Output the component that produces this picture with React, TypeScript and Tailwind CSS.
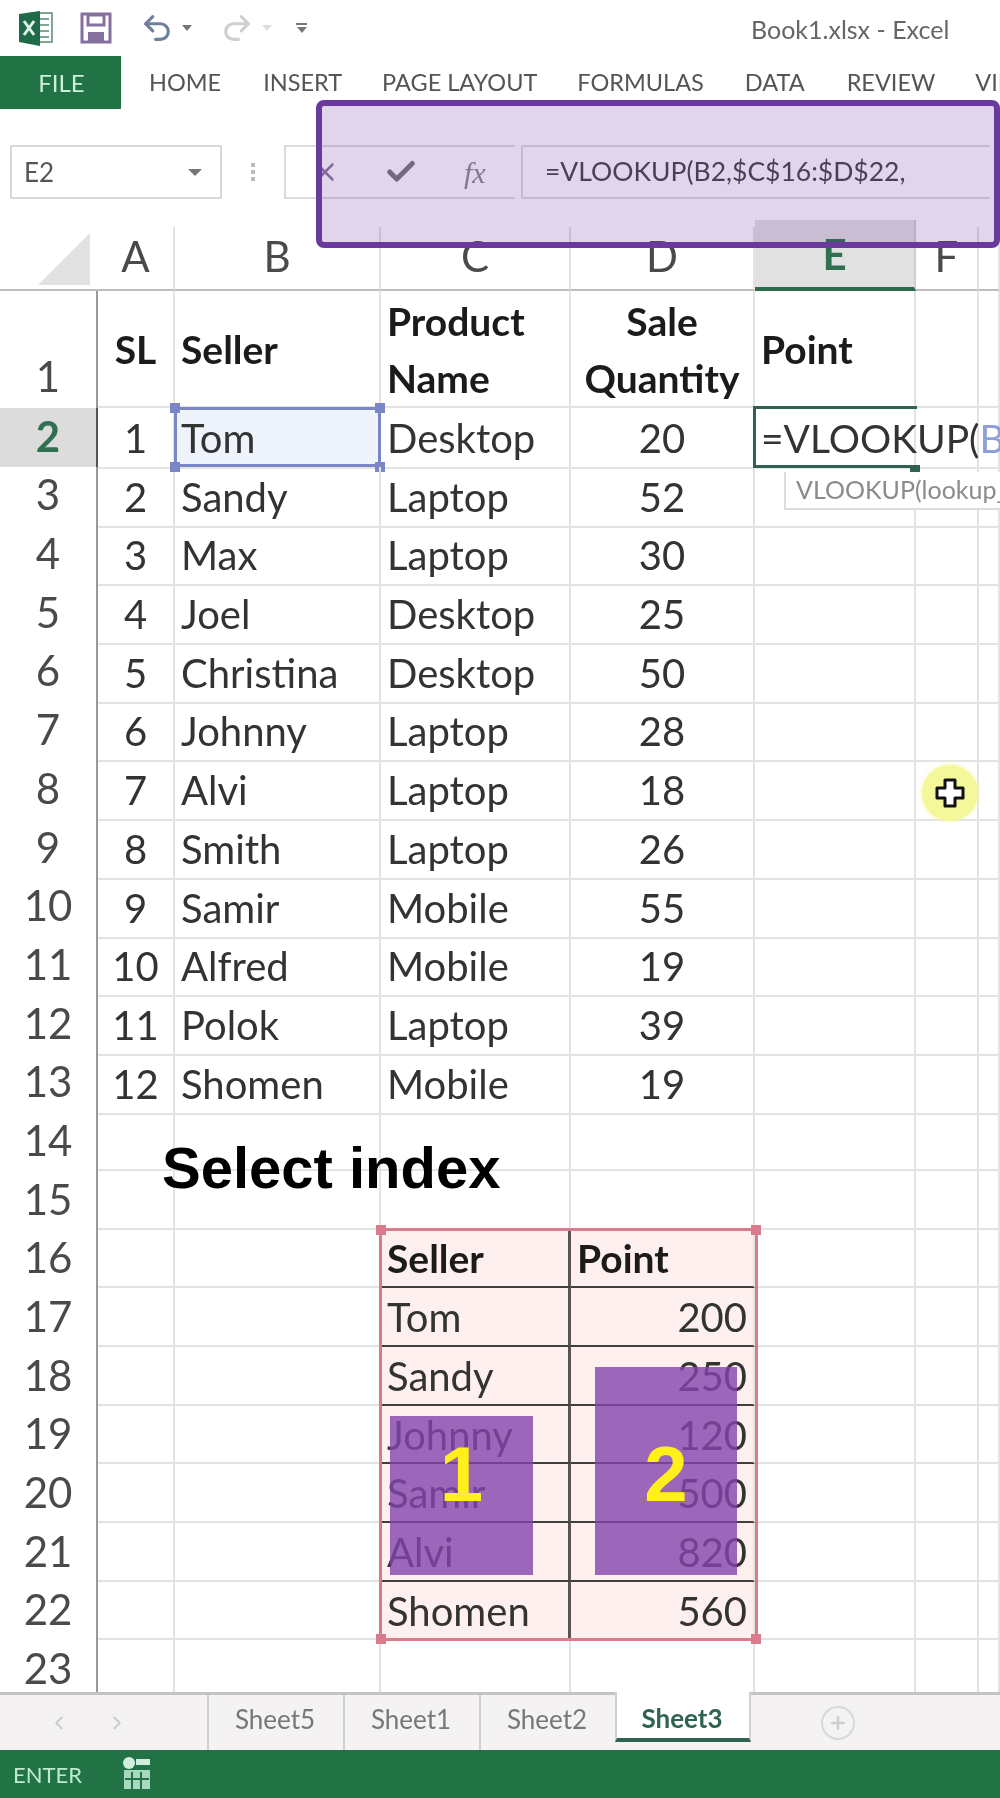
import React from "react";
import { Check, X, Undo2, Redo2, ChevronLeft, ChevronRight, Plus } from "lucide-react";

const data: [string, string, string, string][] = [
  ["1", "Tom", "Desktop", "20"],
  ["2", "Sandy", "Laptop", "52"],
  ["3", "Max", "Laptop", "30"],
  ["4", "Joel", "Desktop", "25"],
  ["5", "Christina", "Desktop", "50"],
  ["6", "Johnny", "Laptop", "28"],
  ["7", "Alvi", "Laptop", "18"],
  ["8", "Smith", "Laptop", "26"],
  ["9", "Samir", "Mobile", "55"],
  ["10", "Alfred", "Mobile", "19"],
  ["11", "Polok", "Laptop", "39"],
  ["12", "Shomen", "Mobile", "19"],
];

const lookup: [string, string][] = [
  ["Seller", "Point"],
  ["Tom", "200"],
  ["Sandy", "250"],
  ["Johnny", "120"],
  ["Samir", "500"],
  ["Alvi", "820"],
  ["Shomen", "560"],
];

const gridCols = "grid grid-cols-[98px_77px_206px_190px_184px_161px_63px_21px]";
const cell = "border-r-2 border-b-2 border-[#e3e3e3] flex items-center pt-[2px] overflow-hidden whitespace-nowrap";
const rowH = "h-[58.7px]";

function Handle({ className }: { className: string }) {
  return <span className={`absolute w-[10px] h-[10px] ${className}`} />;
}

function RowLabel({ n, active }: { n: number; active?: boolean }) {
  return (
    <div
      className={`${rowH} flex items-end justify-center pb-[6px] text-[42px] leading-[50px] border-r-[2px] ${
        active
          ? "bg-[#dcdcdc] text-[#2f6f52] font-bold border-[#555]"
          : "text-[#4a4a4a] border-[#9a9a9a]"
      }`}
    >
      {n}
    </div>
  );
}

function Row({ n, cells }: { n: number; cells: React.ReactNode[] }) {
  return (
    <div className={`${gridCols} ${rowH}`}>
      <RowLabel n={n} active={n === 2} />
      {cells}
    </div>
  );
}

function Empty() {
  return <div className={cell} />;
}

export default function App() {
  return (
    <div className="relative w-[1000px] h-[1798px] overflow-hidden bg-white text-[#333] font-['Lato','Noto_Sans',sans-serif] blur-[0.7px] flex flex-col">
      {/* Quick access + title */}
      <div className="h-[56px] flex items-center pl-[18px] relative">
        <svg width="36" height="36" viewBox="0 0 36 36">
          <rect x="14" y="3" width="20" height="29" fill="#fff" stroke="#7fa892" strokeWidth="2" />
          <path d="M22 9h9M22 15h9M22 21h9M22 27h9" stroke="#7fa892" strokeWidth="2" />
          <path d="M1 4 L22 1 V36 L1 32 Z" fill="#1f6a48" />
          <path d="M6 11 L16 25 M16 11 L6 25" stroke="#dff3e8" strokeWidth="3" />
        </svg>
        <svg className="ml-[26px]" width="32" height="32" viewBox="0 0 32 32">
          <path d="M2 2 H30 V30 H2 Z" fill="none" stroke="#85709f" strokeWidth="3" />
          <rect x="8" y="3" width="16" height="10" fill="none" stroke="#85709f" strokeWidth="3" />
          <rect x="8" y="20" width="16" height="10" fill="#85709f" />
        </svg>
        <Undo2 className="ml-[28px] text-[#6d7f9c]" size={34} strokeWidth={2.2} />
        <span className="ml-[8px] w-0 h-0 border-x-[5px] border-x-transparent border-t-[6px] border-t-[#777]" />
        <Redo2 className="ml-[28px] text-[#cfcfcf]" size={34} strokeWidth={2.2} />
        <span className="ml-[8px] w-0 h-0 border-x-[5px] border-x-transparent border-t-[6px] border-t-[#ddd]" />
        <span className="ml-[24px] flex flex-col items-center gap-[2px]">
          <span className="w-[11px] h-[2px] bg-[#777]" />
          <span className="w-0 h-0 border-x-[5px] border-x-transparent border-t-[6px] border-t-[#777]" />
        </span>
        <span className="absolute left-[751px] top-[13px] text-[25px] leading-[32px] text-[#666] whitespace-nowrap">
          Book1.xlsx - Excel
        </span>
      </div>

      {/* Ribbon tabs */}
      <div className="h-[53px] flex items-center text-[23.5px] text-[#555] whitespace-nowrap overflow-hidden">
        <div className="w-[121px] h-full bg-[#217346] text-[#c9f0d8] flex items-center justify-center pl-[2px] shrink-0 text-[24px]">FILE</div>
        <span className="ml-[28px]">HOME</span>
        <span className="ml-[42px]">INSERT</span>
        <span className="ml-[40px]">PAGE LAYOUT</span>
        <span className="ml-[40px]">FORMULAS</span>
        <span className="ml-[41px]">DATA</span>
        <span className="ml-[42px]">REVIEW</span>
        <span className="ml-[40px]">VIEW</span>
      </div>

      {/* Formula bar */}
      <div className="mt-[36px] h-[54px] flex items-stretch pl-[10px]">
        <div className="w-[212px] border-2 border-[#d8d8d8] flex items-center justify-between pl-[12px] pr-[18px] text-[26px] text-[#555]">
          E2
          <span className="w-0 h-0 border-x-[7px] border-x-transparent border-t-[7px] border-t-[#777]" />
        </div>
        <div className="w-[62px] flex flex-col items-center justify-center gap-[3px]">
          <span className="w-[4px] h-[4px] bg-[#bbb]" />
          <span className="w-[4px] h-[4px] bg-[#bbb]" />
          <span className="w-[4px] h-[4px] bg-[#bbb]" />
        </div>
        <div className="w-[231px] border-y-2 border-l-2 border-[#dcdcdc] flex items-center text-[#777]">
          <X className="ml-[24px] text-[#8b7a9b]" size={30} strokeWidth={2} />
          <Check className="ml-[44px]" size={34} strokeWidth={3.5} />
          <span className="ml-[46px] font-['Liberation_Serif',serif] italic text-[30px] text-[#8a8a8a]">fx</span>
        </div>
        <div className="flex-1 border-y-2 border-l-2 border-[#dcdcdc] ml-[6px] mr-[10px] flex items-center pl-[22px] text-[26.5px] text-[#444] whitespace-nowrap">
          =VLOOKUP(B2,$C$16:$D$22,
        </div>
      </div>

      {/* Column headers */}
      <div className={`${gridCols} h-[92px] text-[42px] text-[#4a4a4a]`}>
        <div className="relative border-b-2 border-[#bdbdbd]">
          <span className="absolute left-[38px] top-[34px] w-0 h-0 border-l-[52px] border-l-transparent border-b-[52px] border-b-[#e2e2e2]" />
        </div>
        {["A", "B", "C", "D", "E", "F", "G"].map((c) => (
          <div
            key={c}
            className={`flex items-end justify-center pb-[8px] border-r-2 ${
              c === "E"
                ? "bg-[#e1e1e1] text-[#2f6f52] font-bold border-b-[4px] border-b-[#2c6b4d] border-r-[#cfcfcf] mt-[21px]"
                : "border-b-2 border-b-[#bdbdbd] border-r-[#e3e3e3] mt-[28px]"
            }`}
          >
            <span className="leading-[50px]">{c === "G" ? "" : c}</span>
          </div>
        ))}
      </div>

      {/* Sheet */}
      <div className="relative flex-1 min-h-0 overflow-hidden">
        <div className="text-[40px] leading-[57px]">
          {/* Row 1 */}
          <div className={`${gridCols} h-[117px] font-bold text-[#1b1b1b] text-[39px]`}>
            <div className="flex items-end justify-center pb-[7px] text-[42px] leading-[50px] font-normal text-[#4a4a4a] border-r-[2px] border-[#9a9a9a]">1</div>
            <div className={`${cell} justify-center`}>SL</div>
            <div className={`${cell} pl-[6px]`}>Seller</div>
            <div className={`${cell} pl-[6px]`}>
              <span>Product<br />Name</span>
            </div>
            <div className={`${cell} justify-center text-center`}>
              <span>Sale<br />Quantity</span>
            </div>
            <div className={`${cell} pl-[6px]`}>Point</div>
            <div className={cell} />
            <div className={cell} />
          </div>

          {/* Rows 2-13 */}
          {data.map((r, i) => {
            const n = i + 2;
            return (
              <Row
                key={n}
                n={n}
                cells={[
                  <div key="a" className={`${cell} justify-center`}>{r[0]}</div>,
                  <div key="b" className={`${cell} pl-[6px] relative overflow-visible ${n === 2 ? "bg-[#eef3fc]" : ""}`}>
                    {r[1]}
                    {n === 2 && (
                      <>
                        <span className="absolute -left-[1px] -top-[1px] w-[207px] h-[60px] border-[3px] border-[#7a86c6]" />
                        <Handle className="-left-[5px] -top-[5px] bg-[#7a86c6]" />
                        <Handle className="-right-[6px] -top-[5px] bg-[#7a86c6]" />
                        <Handle className="-left-[5px] -bottom-[5px] bg-[#7a86c6]" />
                        <Handle className="-right-[6px] -bottom-[5px] bg-[#7a86c6]" />
                      </>
                    )}
                  </div>,
                  <div key="c" className={`${cell} pl-[6px]`}>{r[2]}</div>,
                  <div key="d" className={`${cell} justify-center`}>{r[3]}</div>,
                  <div key="e" className={`${cell} text-[39px] ${n === 2 ? "relative overflow-visible pl-[6px] z-10" : ""}`}>
                    {n === 2 && (
                      <>
                        <span className="relative z-10 text-[#333]">
                          =VLOOKUP(<span className="text-[#8ea0d8]">B2</span>
                        </span>
                        <span className="absolute -left-[2px] -top-[2px] w-[164px] h-[62px] border-y-[3px] border-l-[3px] border-[#2f6350]" />
                        <span className="absolute -right-[6px] -bottom-[6px] w-[10px] h-[8px] bg-[#2f6350]" />
                        <span className="absolute left-[29px] top-[64px] w-[260px] h-[38px] bg-white border-b-2 border-l-2 border-[#dcdcdc] pl-[10px] text-[25px] leading-[34px] text-[#8b8b8b] z-20">
                          VLOOKUP(lookup_
                        </span>
                      </>
                    )}
                  </div>,
                  <div key="f" className={cell} />,
                  <div key="g" className={cell} />,
                ]}
              />
            );
          })}

          {/* Rows 14-15 */}
          {[14, 15].map((n) => (
            <Row key={n} n={n} cells={[0, 1, 2, 3, 4, 5, 6].map((k) => <Empty key={k} />)} />
          ))}

          {/* Rows 16-22 */}
          {lookup.map((r, i) => {
            const n = i + 16;
            const hdr = i === 0;
            return (
              <Row
                key={n}
                n={n}
                cells={[
                  <div key="a" className={cell} />,
                  <div key="b" className={cell} />,
                  <div key="c" className={`${cell} pl-[6px] bg-[#fef0ee] border-r-[3px] border-r-[#555] border-b-[2px] border-b-[#3f3f3f] ${hdr ? "font-bold text-[39px] text-[#1b1b1b]" : ""}`}>{r[0]}</div>,
                  <div key="d" className={`${cell} pl-[6px] pr-[6px] bg-[#fef0ee] border-b-[2px] border-b-[#3f3f3f] ${hdr ? "font-bold text-[39px] text-[#1b1b1b] justify-start" : "justify-end"}`}>{r[1]}</div>,
                  <div key="e" className={cell} />,
                  <div key="f" className={cell} />,
                  <div key="g" className={cell} />,
                ]}
              />
            );
          })}

          {/* Row 23 */}
          <Row n={23} cells={[0, 1, 2, 3, 4, 5, 6].map((k) => <Empty key={k} />)} />
        </div>

        {/* Select index caption */}
        <div className="absolute left-[162px] top-[847px] font-['Liberation_Sans',sans-serif] font-bold text-[58px] leading-[60px] text-black whitespace-nowrap">
          Select index
        </div>

        {/* Lookup range outline */}
        <div className="absolute left-[379px] top-[937px] w-[379px] h-[413px] border-[3px] border-[#d97b8c] pointer-events-none">
          <Handle className="-left-[6px] -top-[6px] bg-[#d97b8c]" />
          <Handle className="-right-[6px] -top-[6px] bg-[#d97b8c]" />
          <Handle className="-left-[6px] -bottom-[6px] bg-[#d97b8c]" />
          <Handle className="-right-[6px] -bottom-[6px] bg-[#d97b8c]" />
        </div>

        {/* Purple highlight blocks */}
        <div className="absolute left-[390px] top-[1125px] w-[143px] h-[159px] bg-[#8344ad]/80 flex justify-center pt-[19px]">
          <span className="font-['Liberation_Sans',sans-serif] font-bold text-[78px] leading-none text-[#ffef1a]">1</span>
        </div>
        <div className="absolute left-[595px] top-[1076px] w-[142px] h-[208px] bg-[#8344ad]/80 flex justify-center pt-[68px]">
          <span className="font-['Liberation_Sans',sans-serif] font-bold text-[78px] leading-none text-[#ffef1a]">2</span>
        </div>

        {/* Cursor */}
        <div className="absolute left-[922px] top-[474px] w-[56px] h-[56px] rounded-full bg-[#f4f89a] shadow-[0_0_4px_#f4f89a] flex items-center justify-center">
          <svg width="34" height="34" viewBox="0 0 34 34">
            <path d="M12 4h10v8h8v10h-8v8H12v-8H4V12h8z" fill="#fff" stroke="#111" strokeWidth="3" strokeLinejoin="round" />
          </svg>
        </div>
      </div>

      {/* Sheet tabs */}
      <div className="h-[58px] border-t-[3px] border-[#c4c4c4] bg-[#f4f2f2] flex items-stretch text-[26px] text-[#777] relative">
        <div className="w-[207px] flex items-center pl-[48px] gap-[36px] text-[#c9c9c9]">
          <ChevronLeft size={22} />
          <ChevronRight size={22} />
        </div>
        {["Sheet5", "Sheet1", "Sheet2"].map((s) => (
          <div key={s} className="w-[136px] border-l-2 border-[#d0d0d0] flex items-center justify-center pb-[6px] pr-[2px]">{s}</div>
        ))}
        <div className="w-[136px] -mt-[3px] bg-white border-x-2 border-[#d0d0d0] border-b-[4px] border-b-[#2f6350] mb-[8px] pt-[6px] pr-[2px] flex items-center justify-center font-bold text-[#2f6350]">Sheet3</div>
        <div className="ml-[70px] self-center w-[34px] h-[34px] rounded-full border-2 border-[#d8d8d8] flex items-center justify-center text-[#cfcfcf]">
          <Plus size={20} strokeWidth={3} />
        </div>
      </div>

      {/* Status bar */}
      <div className="h-[48px] bg-[#217346] flex items-center pl-[13px] text-[22px] text-[#bfe9d0]">
        ENTER
        <svg className="ml-[40px]" width="30" height="34" viewBox="0 0 30 34">
          <circle cx="7" cy="6" r="6" fill="#cfeedd" />
          <rect x="14" y="2" width="14" height="6" fill="#cfeedd" />
          <rect x="2" y="13" width="26" height="19" fill="#a9d8c0" />
          <path d="M10 15v17M19 15v17M3 22h24" stroke="#217346" strokeWidth="2" />
        </svg>
      </div>

      {/* Purple callout over formula bar */}
      <div className="absolute left-[316px] top-[100px] w-[684px] h-[148px] rounded-[8px] border-[6px] border-[#693a9c] bg-[#6a2fa0]/20" />
    </div>
  );
}
